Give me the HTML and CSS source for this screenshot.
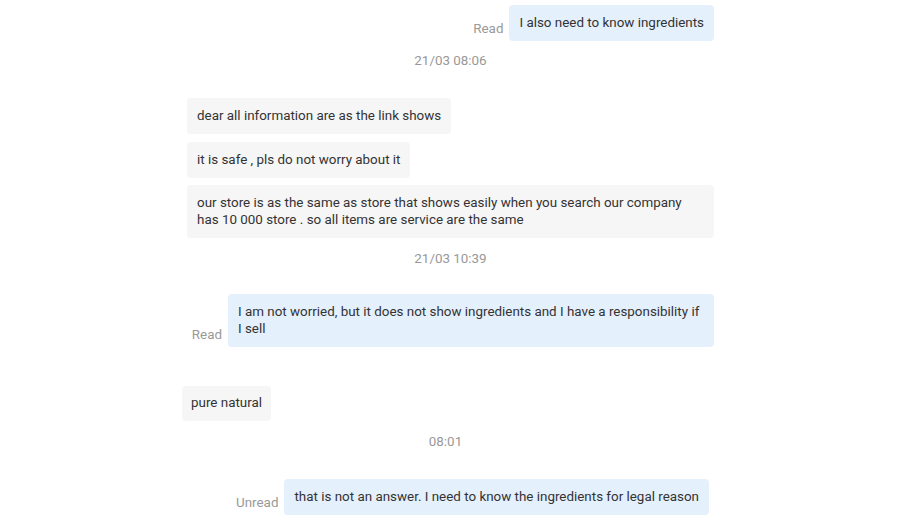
FILE: index.html
```html
<!DOCTYPE html>
<html lang="en">
<head>
  <meta charset="UTF-8" />
  <meta name="viewport" content="width=device-width, initial-scale=1.0"/>
  <title>Chat</title>
  <link rel="stylesheet" href="styles.css">
</head>
<body>
  <div class="chat">
    <div class="row out">
      <span class="status">Read</span>
      <div class="bubble mine">I also need to know ingredients</div>
    </div>
    <div class="time t1">21/03 08:06</div>

    <div class="row in first">
      <div class="bubble theirs">dear all information are as the link shows</div>
    </div>
    <div class="row in next">
      <div class="bubble theirs">it is safe , pls do not worry about it</div>
    </div>
    <div class="row in next2">
      <div class="bubble theirs">our store is as the same as store that shows easily when you search our company has 10 000 store . so all items are service are the same</div>
    </div>
    <div class="time t2">21/03 10:39</div>

    <div class="row out after-time">
      <span class="status">Read</span>
      <div class="bubble mine wide">I am not worried, but it does not show ingredients and I have a responsibility if I sell</div>
    </div>

    <div class="section">
      <div class="row in gap-big">
        <div class="bubble theirs short">pure natural</div>
      </div>
      <div class="time t3">08:01</div>
      <div class="row out last">
        <span class="status">Unread</span>
        <div class="bubble mine">that is not an answer. I need to know the ingredients for legal reason</div>
      </div>
    </div>
  </div>
</body>
</html>
```

FILE: styles.css
```css
body {
  margin: 0;
  font-family: Roboto, "Noto Sans", sans-serif;
  font-size: 13.4px;
  color: #333;
  background: #fff;
}
.chat {
  width: 527px;
  margin-left: 187px;
  padding-top: 5px;
}
.row {
  display: flex;
  align-items: flex-end;
  gap: 6px;
}
.row.out {
  justify-content: flex-end;
}
.row.in {
  justify-content: flex-start;
}
.bubble {
  padding: 9px 10px 10px;
  line-height: 17px;
  border-radius: 4px;
  max-width: 507px;
}
.mine {
  background: #e5f0fd;
}
.theirs {
  background: #f6f6f6;
}
.short {
  padding: 8px 9px 10px;
}
.wide {
  max-width: 466px;
}
.status {
  color: #999;
  line-height: 18px;
  padding-bottom: 3px;
}
.time {
  text-align: center;
  color: #999;
  line-height: 18px;
}
.t1 {
  margin-top: 11px;
}
.t2 {
  margin-top: 12px;
}
.t3 {
  margin-top: 12px;
}
.first {
  margin-top: 28px;
}
.next {
  margin-top: 8px;
}
.next2 {
  margin-top: 7px;
}
.after-time {
  margin-top: 26px;
}
.section {
  margin-left: -5px;
  margin-right: 5px;
}
.gap-big {
  margin-top: 39px;
}
.last {
  margin-top: 28px;
}
```
